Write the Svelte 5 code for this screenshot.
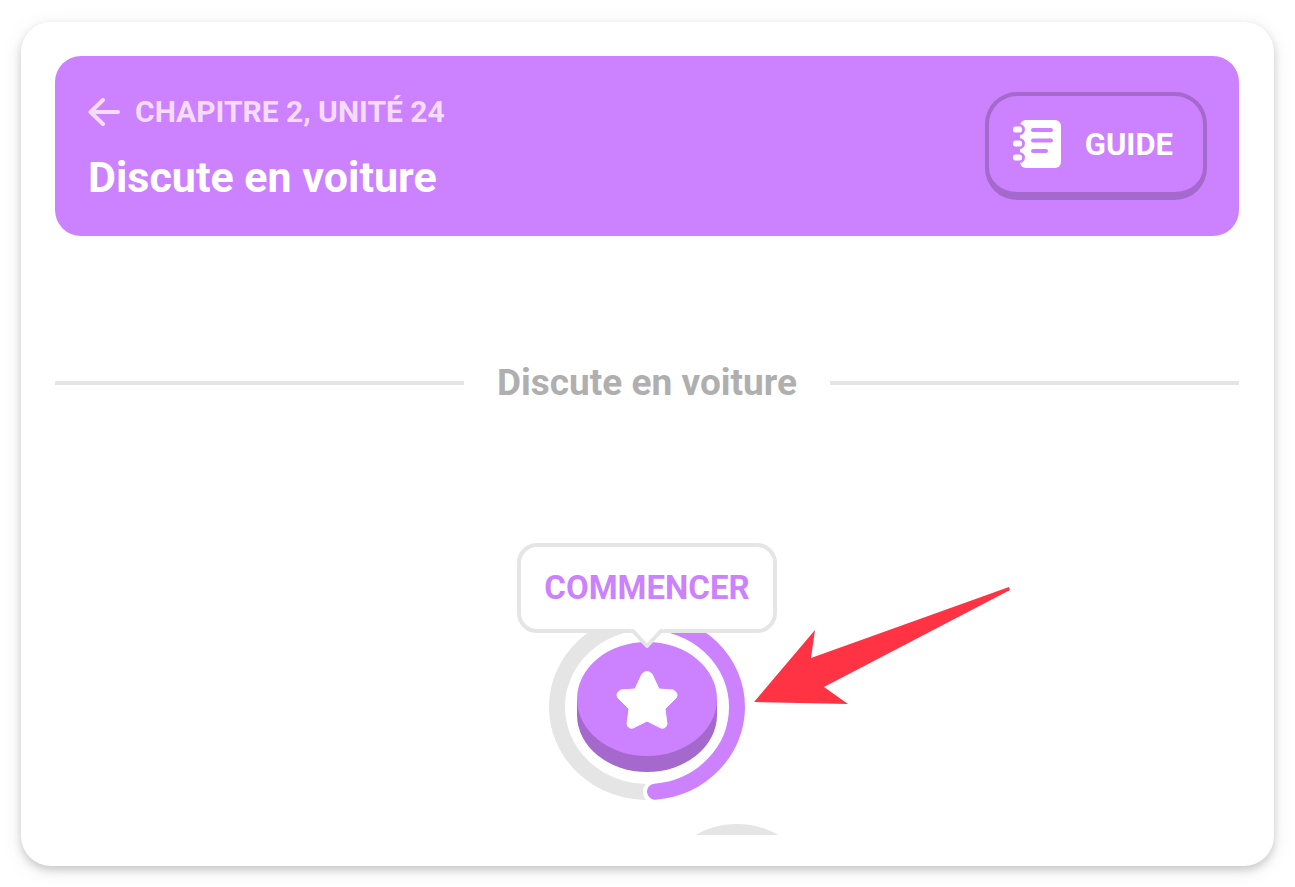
<script lang="ts">
  // Unit data
  let chapter = 2;
  let unit = 24;
  let title = 'Discute en voiture';
</script>

<main class="card">
  <header class="banner">
    <div class="heading">
      <a class="back" href="#chapitres">
        <svg width="32" height="30" viewBox="0 0 32 30" aria-hidden="true">
          <path d="M30 15H3M15 3L2.5 15L15 27" fill="none" stroke="currentColor" stroke-width="4" stroke-linecap="round" stroke-linejoin="round" />
        </svg>
        <span>CHAPITRE {chapter}, UNITÉ {unit}</span>
      </a>
      <h1>{title}</h1>
    </div>
    <button class="guide" type="button">
      <svg width="48" height="48" viewBox="0 0 48 48" aria-hidden="true">
        <rect x="7" y="0" width="41" height="48" rx="6" fill="#fff" />
        {#each [9.5, 23.5, 37.5] as y}
          <rect x="-2" y={y - 5.5} width="14" height="11" rx="5.5" fill="#cc82ff" />
          <rect x="0" y={y - 3} width="9" height="6" rx="2.5" fill="#fff" />
        {/each}
        <path d="M20 10H38M20 20.5H38M20 31H33" stroke="#cc82ff" stroke-width="4" stroke-linecap="round" />
      </svg>
      <span>GUIDE</span>
    </button>
  </header>

  <div class="divider">
    <h2>{title}</h2>
  </div>

  <section class="path">
    <div class="lesson">
      <button class="node" type="button" aria-label="Commencer la leçon">
        <svg width="196" height="186" viewBox="0 0 196 186" aria-hidden="true">
          <ellipse cx="98" cy="93" rx="90" ry="85" fill="none" stroke="#e5e5e5" stroke-width="16" />
          <path d="M98 8A90 85 0 0 1 188 93A90 85 0 0 1 106 177.7" fill="none" stroke="#fff" stroke-width="24" stroke-linecap="round" />
          <path d="M98 8A90 85 0 0 1 188 93A90 85 0 0 1 106 177.7" fill="none" stroke="#cc82ff" stroke-width="16" stroke-linecap="round" />
          <path d="M28 85V101A70 57 0 0 0 168 101V85Z" fill="#a568cc" />
          <ellipse cx="98" cy="85" rx="70" ry="57" fill="#cc82ff" />
          <path
            d="M93 60Q98 55 103 60L110 75L124 76Q130 79 127 84L116 95L118 110Q117 115 112 114L98 107L84 114Q79 115 78 110L80 95L69 84Q66 79 72 76L86 75Z"
            fill="#fff"
            stroke="#fff"
            stroke-linejoin="round"
          />
        </svg>
      </button>
      <div class="bubble">
        COMMENCER
        <svg class="tail" width="34" height="20" viewBox="0 0 34 20" aria-hidden="true">
          <path d="M0 0H34L30 4L17 17L4 4Z" fill="#fff" />
          <path d="M1 2H3L17 17L31 2H33" fill="none" stroke="#e5e5e5" stroke-width="4" stroke-linejoin="round" />
        </svg>
      </div>
      <svg class="pointer" width="258" height="120" viewBox="0 0 258 120" aria-hidden="true">
        <path d="M0 115L61 43L57 71L255 0L256 3L70 100L94 117Z" fill="#ff3344" />
      </svg>
    </div>
    <button class="locked" type="button" aria-label="Leçon suivante"></button>
  </section>
</main>

<style>
  :global(body) {
    margin: 0;
    background: #fff;
  }

  .card {
    box-sizing: border-box;
    margin: 22px 21px 20px;
    padding: 34px 35px 31px 34px;
    border-radius: 30px;
    background: #fff;
    box-shadow: 0 4px 8px rgba(0, 0, 0, 0.18), 0 4px 24px rgba(0, 0, 0, 0.07);
    font-family: Roboto, "Liberation Sans", sans-serif;
    font-weight: 700;
  }

  .banner {
    display: flex;
    justify-content: space-between;
    align-items: flex-start;
    box-sizing: border-box;
    min-height: 180px;
    padding: 36px 32px 34px 33px;
    border-radius: 26px;
    background: #cc82ff;
    color: #fff;
  }

  .back {
    display: flex;
    align-items: center;
    gap: 15px;
    color: #f5dcff;
    font-size: 30px;
    line-height: 40px;
    text-decoration: none;
  }

  h1,
  h2 {
    margin: 0;
    font-weight: 700;
  }

  h1 {
    margin-top: 20px;
    font-size: 43px;
    line-height: 50px;
  }

  .guide {
    display: flex;
    align-items: center;
    gap: 24px;
    height: 108px;
    padding: 0 30px 0 24px;
    border: 4px solid #a568cc;
    border-bottom-width: 8px;
    border-radius: 32px;
    background: transparent;
    color: #fff;
    font: inherit;
    font-size: 31px;
    cursor: pointer;
  }

  .divider {
    display: flex;
    align-items: center;
    gap: 33px;
    margin-top: 122px;
  }

  .divider::before,
  .divider::after {
    content: "";
    flex: 1;
    height: 4px;
    background: #e5e5e5;
  }

  h2 {
    color: #afafaf;
    font-size: 37px;
    line-height: 50px;
  }

  .path {
    display: flex;
    flex-direction: column;
    align-items: center;
    gap: 24px;
    box-sizing: border-box;
    max-height: 427px;
    padding-top: 206px;
    overflow: hidden;
  }

  .lesson {
    position: relative;
    flex: none;
  }

  .node {
    display: block;
    padding: 0;
    border: none;
    background: none;
    cursor: pointer;
  }

  .node svg {
    display: block;
  }

  .bubble {
    position: absolute;
    bottom: 167px;
    left: 50%;
    box-sizing: border-box;
    width: 260px;
    border: 4px solid #e5e5e5;
    border-radius: 20px;
    background: #fff;
    color: #cc82ff;
    font-size: 33px;
    line-height: 82px;
    text-align: center;
    transform: translateX(-50%);
  }

  .tail {
    position: absolute;
    top: 100%;
    left: 50%;
    transform: translateX(-50%);
  }

  .pointer {
    position: absolute;
    top: -27px;
    left: 205px;
  }

  .locked {
    flex: none;
    width: 140px;
    height: 114px;
    margin-left: 180px;
    padding: 0;
    border: none;
    border-radius: 50%;
    background: #e5e5e5;
  }
</style>
